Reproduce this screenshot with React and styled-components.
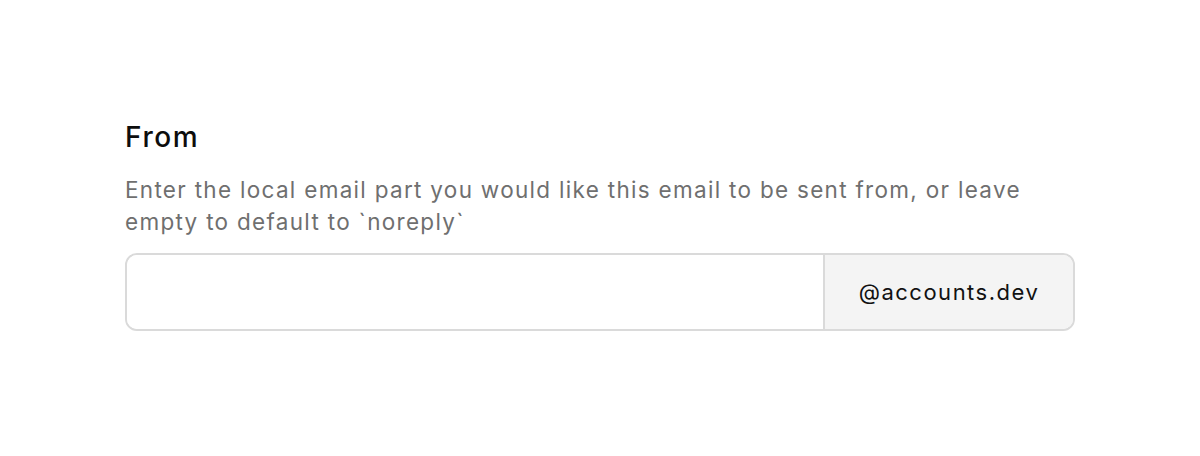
import React from "react";
import styled, { createGlobalStyle } from "styled-components";

const Global = createGlobalStyle`
  html, body { margin: 0; padding: 0; background: #ffffff; }
  body { font-family: Inter, "Noto Sans", sans-serif; -webkit-font-smoothing: antialiased; }
`;

const Page = styled.div`
  width: 1200px;
  height: 456px;
  box-sizing: border-box;
  padding: 117px 125px 0 125px;
`;

const Field = styled.div`
  display: flex;
  flex-direction: column;
  width: 950px;
`;

const Label = styled.label`
  font-size: 28px;
  line-height: 40px;
  font-weight: 500;
  letter-spacing: 1.6px;
  color: #0d0d0d;
  margin-bottom: 17px;
`;

const Description = styled.p`
  margin: 0 0 15px 0;
  font-size: 22.5px;
  line-height: 32px;
  letter-spacing: 1.3px;
  color: #6f6f6f;
  font-weight: 400;
`;

const InputGroup = styled.div`
  display: flex;
  height: 78px;
  box-sizing: border-box;
  border: 2px solid #dadada;
  border-radius: 12px;
  overflow: hidden;
`;

const Input = styled.input`
  flex: 1;
  min-width: 0;
  border: none;
  outline: none;
  padding: 0 24px;
  font-family: inherit;
  font-size: 22px;
  background: #ffffff;
`;

const Addon = styled.div`
  display: flex;
  align-items: center;
  justify-content: center;
  box-sizing: border-box;
  width: 250px;
  border-left: 2px solid #dadada;
  background: #f4f4f4;
  font-size: 22px;
  letter-spacing: 1.5px;
  color: #111111;
`;

export default function App() {
  return (
    <>
      <Global />
      <Page>
        <Field>
          <Label>From</Label>
          <Description>
            Enter the local email part you would like this email to be sent from, or leave
            empty to default to `noreply`
          </Description>
          <InputGroup>
            <Input type="text" />
            <Addon>@accounts.dev</Addon>
          </InputGroup>
        </Field>
      </Page>
    </>
  );
}
